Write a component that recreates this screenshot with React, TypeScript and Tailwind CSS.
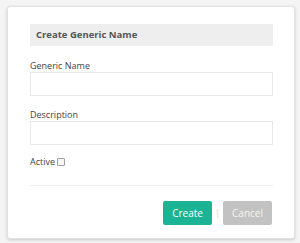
import React from 'react';

export default function App() {
  return (
    <div className="w-[300px] h-[243px] bg-[#f4f4f4] pt-[6px] pl-[7px] font-['Open_Sans',sans-serif]">
      <div className="w-[288px] h-[233px] bg-white border border-[#e2e2e2] rounded-[3px] shadow-[0_1px_3px_rgba(0,0,0,0.18)] pt-[17px] pl-[22px] pr-[21px]">
        {/* header */}
        <div className="h-[22px] bg-[#eeeeee] flex items-center px-[6px]">
          <span className="text-[9.5px] font-bold text-[#555]">Create Generic Name</span>
        </div>

        <div className="mt-[13px] text-[9px] leading-[13px] text-[#444]">Generic Name</div>
        <input className="block w-full h-[24px] border border-[#e8e8e8] outline-none" />

        <div className="mt-[12px] text-[9px] leading-[13px] text-[#444]">Description</div>
        <input className="block w-full h-[24px] border border-[#e8e8e8] outline-none" />

        <div className="mt-[10px] flex items-center text-[9px] leading-[13px] text-[#444]">
          Active
          <span className="ml-[2px] w-[8px] h-[8px] border border-[#a0a0a0] rounded-[1px] bg-[#f6f6f6]" />
        </div>

        <div className="mt-[17px] border-t border-[#eeeeee]" />

        <div className="mt-[15px] flex justify-end items-center pr-[1px]">
          <button className="w-[49px] h-[24px] bg-[#1ab394] rounded-[2px] text-white text-[10px]">Create</button>
          <span className="mx-[3px] text-[9px] text-[#d0d0d0]">|</span>
          <button className="w-[49px] h-[24px] bg-[#c2c2c2] rounded-[2px] text-[#f6f6ee] text-[10px]">Cancel</button>
        </div>
      </div>
    </div>
  );
}
